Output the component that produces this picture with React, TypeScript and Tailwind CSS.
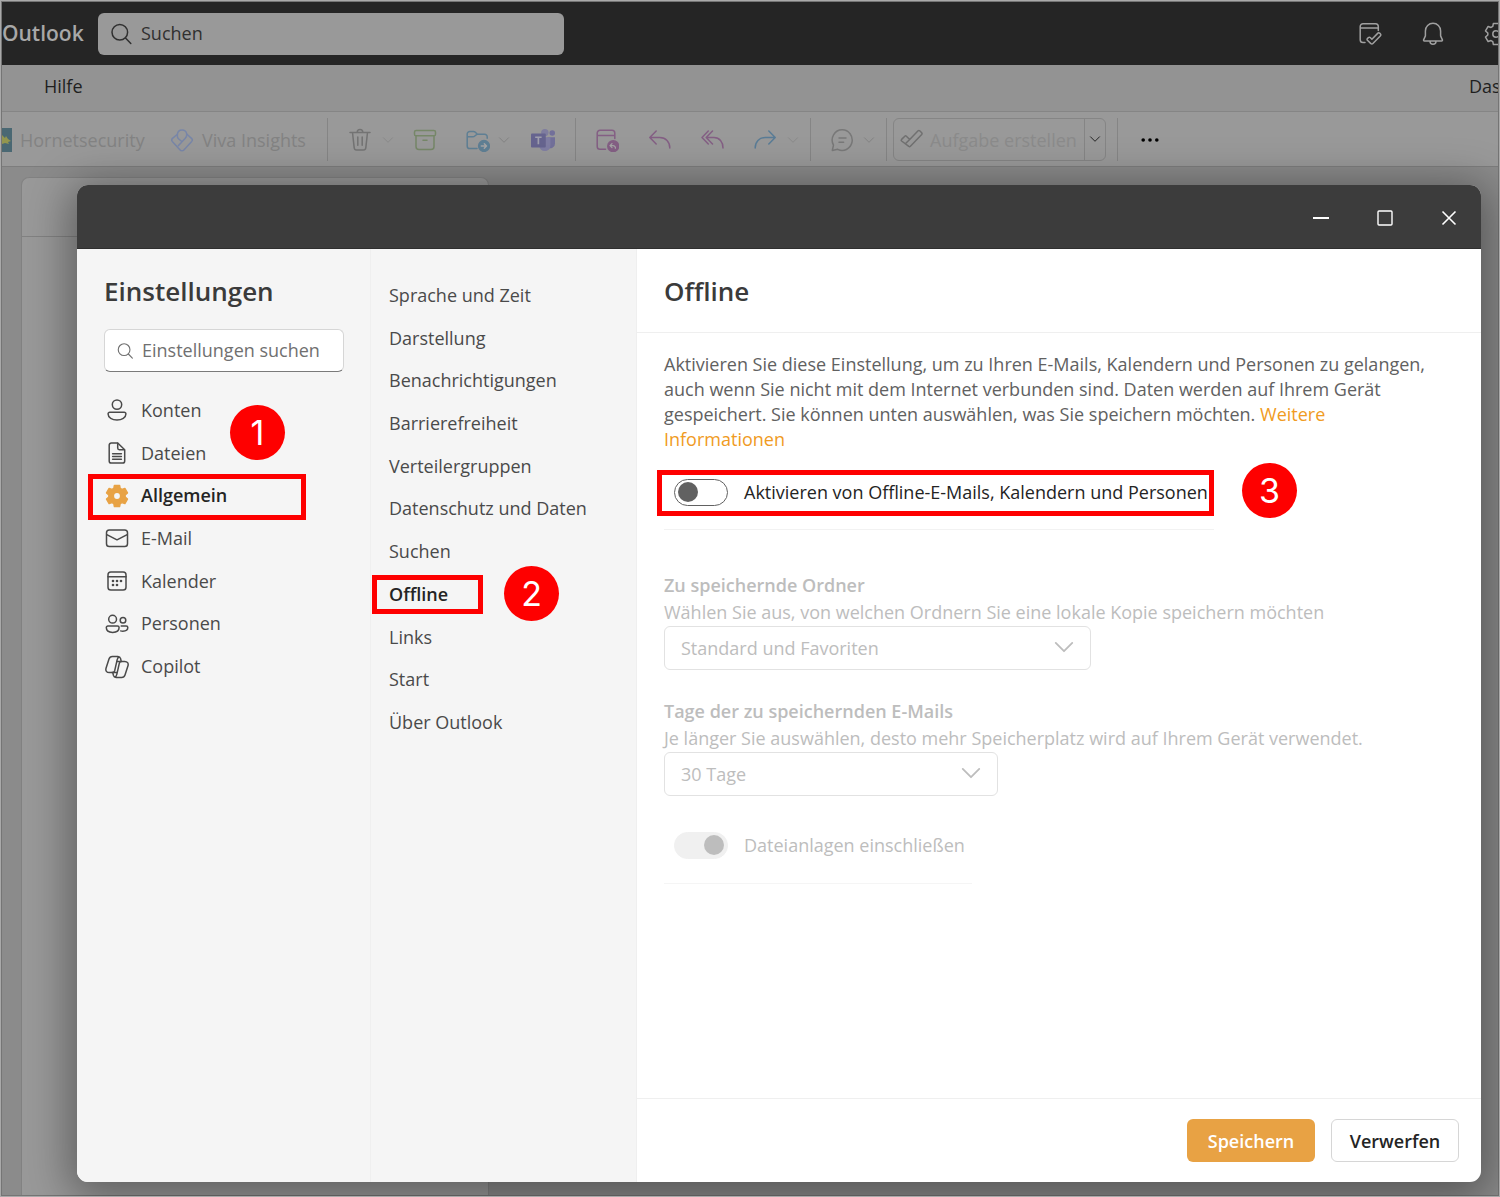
import { useState, type ReactNode } from "react";

type IconProps = { children: ReactNode; className?: string; size?: number };

function Icon({ children, className = "", size = 24 }: IconProps) {
  return (
    <svg
      width={size}
      height={size}
      viewBox="0 0 24 24"
      fill="none"
      stroke="currentColor"
      strokeWidth={1.5}
      strokeLinecap="round"
      strokeLinejoin="round"
      aria-hidden="true"
      className={`shrink-0 ${className}`}
    >
      {children}
    </svg>
  );
}

const gearPath =
  "M8.8 4.4 9.4 1.4H14.6L15.2 4.4 16.98 5.43 19.88 4.45 22.48 8.95 20.18 10.97V13.03L22.48 15.05 19.88 19.55 16.98 18.57 15.2 19.6 14.6 22.6H9.4L8.8 19.6 7.02 18.57 4.12 19.55 1.52 15.05 3.82 13.03V10.97L1.52 8.95 4.12 4.45 7.02 5.43Z";

const SearchIcon = ({ size = 24, className = "" }: { size?: number; className?: string }) => (
  <Icon size={size} className={className}>
    <circle cx="10.8" cy="10.2" r="7.8" />
    <path d="m16.5 16 5.3 5.5" />
  </Icon>
);

const ChevronDown = ({ size = 12, className = "" }: { size?: number; className?: string }) => (
  <svg
    width={size}
    height={size}
    viewBox="0 0 12 12"
    fill="none"
    stroke="currentColor"
    strokeLinecap="round"
    strokeLinejoin="round"
    aria-hidden="true"
    className={`shrink-0 ${className}`}
  >
    <path d="m1.5 3.8 4.5 4.5 4.5-4.5" />
  </svg>
);

const categories = [
  {
    label: "Konten",
    icon: (
      <Icon>
        <circle cx="12" cy="6.6" r="4.7" />
        <path d="M4.8 14.2h14.4a1.7 1.7 0 0 1 1.7 1.8c0 3.6-4 6-8.9 6s-8.9-2.4-8.9-6a1.7 1.7 0 0 1 1.7-1.8z" />
      </Icon>
    ),
  },
  {
    label: "Dateien",
    icon: (
      <Icon>
        <path d="M6.3 2h6.4l7 6.7v11.2a2.1 2.1 0 0 1-2.1 2.1H6.3a2.1 2.1 0 0 1-2.1-2.1V4.1A2.1 2.1 0 0 1 6.3 2z" />
        <path d="M12.7 2.2v4.9a1.6 1.6 0 0 0 1.6 1.6h5M7.6 12.7h8.8M7.6 15.5h8.8M7.6 18.3h8.8" />
      </Icon>
    ),
  },
  {
    label: "Allgemein",
    icon: (
      <Icon className="text-[#e8a244]">
        <path fill="currentColor" strokeWidth="1.4" d={gearPath} />
        <circle cx="12" cy="12" r="2.9" fill="#f5f5f5" stroke="none" />
      </Icon>
    ),
  },
  {
    label: "E-Mail",
    icon: (
      <Icon>
        <rect x="1.5" y="4" width="21" height="16.6" rx="2.8" />
        <path d="m1.8 8.6 10.2 5.2 10.2-5.2" />
      </Icon>
    ),
  },
  {
    label: "Kalender",
    icon: (
      <Icon>
        <rect x="3" y="3" width="18" height="18" rx="2.8" />
        <path d="M3 7.8h18" />
        <g fill="currentColor" stroke="none">
          <circle cx="8" cy="12" r="1.3" />
          <circle cx="12" cy="12" r="1.3" />
          <circle cx="16" cy="12" r="1.3" />
          <circle cx="8" cy="16" r="1.3" />
          <circle cx="12" cy="16" r="1.3" />
        </g>
      </Icon>
    ),
  },
  {
    label: "Personen",
    icon: (
      <Icon>
        <circle cx="7.6" cy="7.2" r="3.9" />
        <circle cx="18" cy="8.2" r="2.8" />
        <path d="M2.9 14h9.6a1.6 1.6 0 0 1 1.6 1.6c0 3.2-2.6 4.8-6.4 4.8s-6.4-1.6-6.4-4.8A1.6 1.6 0 0 1 2.9 14zM16.2 14h5a1.6 1.6 0 0 1 1.6 1.6c0 2.4-2.2 3.6-5 3.6-.8 0-1.5-.1-2.1-.3" />
      </Icon>
    ),
  },
  {
    label: "Copilot",
    icon: (
      <Icon>
        <path d="M16.2 6.4 15.6 3.6A2.8 2.8 0 0 0 12.9 1.6H7.4A3.6 3.6 0 0 0 4 4.1L1.1 13C.2 15.9 1.7 17.6 4.3 17.6H7.2A2.6 2.6 0 0 0 9.7 15.7L12.2 4.6Q12.8 1.9 14.4 2.2" />
        <path d="M7.8 17.6 8.4 20.4A2.8 2.8 0 0 0 11.1 22.4H16.6A3.6 3.6 0 0 0 20 19.9L22.9 11C23.8 8.1 22.3 6.4 19.7 6.4H16.8A2.6 2.6 0 0 0 14.3 8.3L11.8 19.4Q11.2 22.1 9.6 21.8M11.8 6.4H17M7 17.6H12.2" />
      </Icon>
    ),
  },
];

const pages = [
  "Sprache und Zeit",
  "Darstellung",
  "Benachrichtigungen",
  "Barrierefreiheit",
  "Verteilergruppen",
  "Datenschutz und Daten",
  "Suchen",
  "Offline",
  "Links",
  "Start",
  "Über Outlook",
];

function Step({ n, className }: { n: number; className: string }) {
  return (
    <span
      className={`pointer-events-none absolute z-10 flex size-[55px] items-center justify-center rounded-full bg-[#fe0000] font-['Inter',sans-serif] text-[34px] font-normal text-white ${className}`}
    >
      {n}
    </span>
  );
}

function Marker({ className }: { className: string }) {
  return <span className={`pointer-events-none absolute border-[5px] border-[#fe0000] ${className}`} />;
}

const Divider = ({ className = "" }: { className?: string }) => (
  <span className={`h-[43px] w-px shrink-0 bg-[#858585] ${className}`} />
);

function Tool({ label, className, children }: { label: string; className: string; children: ReactNode }) {
  return (
    <button
      type="button"
      aria-label={label}
      className={`flex h-full shrink-0 items-center justify-center pt-[2px] ${className}`}
    >
      {children}
    </button>
  );
}

function Toolbar() {
  return (
    <div className="flex h-[55px] items-center overflow-hidden border-b border-[#7d7d7d] bg-[#999999] text-[#838383]">
      <button type="button" className="flex w-[154px] shrink-0 items-center gap-2 pt-[2px]">
        <svg width="10" height="24" viewBox="0 0 10 24" aria-hidden="true" className="shrink-0">
          <path fill="#4a6873" d="M0 0h10v24H0z" />
          <path fill="#93964f" d="m0 7 3 3 1-2 2 3 3 2-3 1 1 2-4-1-3 1z" />
        </svg>
        Hornetsecurity
      </button>
      <button type="button" className="flex w-[171px] shrink-0 items-center gap-2 pt-[2px] pl-[14px]">
        <Icon className="text-[#7886a8]">
          <path d="M7.4 6.2A4.7 4.7 0 0 1 16.7 6l4.8 4.4a2.2 2.2 0 0 1 .2 3l-7.8 8.5a2.5 2.5 0 0 1-3.8 0L2.3 13.4a2.2 2.2 0 0 1 .2-3z" />
          <path d="M7.4 6.2v2.2c0 1.2.6 1.9 1.4 2.6l3.2 2.8M16.7 6c.2 1.8-.3 3-1.4 4.2l-7 7.6" />
        </Icon>
        Viva Insights
      </button>
      <Divider />
      <Tool label="Löschen" className="ml-2 w-[48px] text-[#737373]">
        <Icon>
          <path d="M2 4.5h20M4.5 4.5l1.7 15.3a2.4 2.4 0 0 0 2.4 2.2h6.8a2.4 2.4 0 0 0 2.4-2.2l1.7-15.3M9.2 4.3a2.8 2.8 0 0 1 5.6 0M9.8 9v8.3M14.2 9v8.3" />
        </Icon>
      </Tool>
      <Tool label="Löschoptionen" className="w-2 text-[#8a8a8a]">
        <ChevronDown />
      </Tool>
      <Tool label="Archivieren" className="w-[66px] text-[#768768]">
        <Icon>
          <rect x="1.5" y="2.5" width="21" height="5.3" rx="1.6" />
          <path d="M3 7.8v10.7a3 3 0 0 0 3 3h12a3 3 0 0 0 3-3V7.8M10 12.2h4" />
        </Icon>
      </Tool>
      <Tool label="Verschieben" className="w-10 text-[#5f7f94]">
        <Icon>
          <path d="M11 20.5H3.8a2.6 2.6 0 0 1-2.6-2.6V6.1a2.6 2.6 0 0 1 2.6-2.6h3.6a3 3 0 0 1 2 .8l1.9 1.9h7.3a2.6 2.6 0 0 1 2.6 2.6v1.5M1.2 8.8h5.6a3 3 0 0 0 2-.8l2.3-1.8" />
          <circle cx="18" cy="18" r="5.4" fill="currentColor" />
          <path d="M15.3 18h5M18.3 15.8l2.2 2.2-2.2 2.2" stroke="#a5a5a5" />
        </Icon>
      </Tool>
      <Tool label="Ordneroptionen" className="w-3">
        <ChevronDown />
      </Tool>
      <Tool label="In Teams teilen" className="w-[65px]">
        <svg width="24" height="24" viewBox="0 0 26 26" aria-hidden="true">
          <circle cx="15" cy="5" r="4" fill="#7f7d9f" />
          <circle cx="23" cy="5.5" r="3" fill="#72709a" />
          <path fill="#72709a" d="M18 10h8v7a5 5 0 0 1-8 4z" />
          <path fill="#7f7da3" d="M9 10h12v9a6 6 0 0 1-12 0z" />
          <rect x="0" y="6" width="16" height="15" rx="1" fill="#66648f" />
          <path d="M4.5 10h7M8 10v7.5" stroke="#9f9fae" strokeWidth="1.8" />
        </svg>
      </Tool>
      <Divider />
      <Tool label="Besprechung" className="w-[62px] text-[#845f84]">
        <Icon>
          <path d="M10.5 21.2H5a2.8 2.8 0 0 1-2.8-2.8V5.1A2.8 2.8 0 0 1 5 2.3h12a2.8 2.8 0 0 1 2.8 2.8v5.5M2.2 7.5h17.6" />
          <circle cx="18.2" cy="18.2" r="5.4" fill="currentColor" />
          <path d="m17 15.6-2 2 2 2M15.2 17.6H18a2.4 2.4 0 0 1 2.4 2.6" stroke="#a5a5a5" strokeWidth="1.3" />
        </Icon>
      </Tool>
      <Tool label="Antworten" className="w-[44px] text-[#845f84]">
        <Icon>
          <path d="M8.2 3 1.8 9.5 8.2 16M2 9.5h9.8c6 0 10 4.4 10 10.5" />
        </Icon>
      </Tool>
      <Tool label="Allen antworten" className="w-[62px] text-[#845f84]">
        <Icon>
          <path d="M11.5 3 5.2 9.5l6.3 6.5M7.3 3 1 9.5 7.3 16M5.4 9.5h7.6c5.4 0 9 4.4 9 10.5" />
        </Icon>
      </Tool>
      <Tool label="Weiterleiten" className="w-[42px] text-[#5a7c96]">
        <Icon>
          <path d="m15.8 3 6.4 6.5-6.4 6.5M22 9.5h-9.8c-6 0-10 4.4-10 10.5" />
        </Icon>
      </Tool>
      <Tool label="Weiterleitungsoptionen" className="mr-[10px] w-[14px] text-[#8a8a8a]">
        <ChevronDown />
      </Tool>
      <Divider />
      <Tool label="Chat" className="ml-[11px] w-10 text-[#787878]">
        <Icon>
          <path d="M12.3 1.8a10 10.3 0 1 1-4.6 19.5L2.3 22.4l1.2-5.2A10 10.3 0 0 1 12.3 1.8zM9 10h7M9 14.3h4.6" />
        </Icon>
      </Tool>
      <Tool label="Chatoptionen" className="mr-[10px] w-[14px]">
        <ChevronDown />
      </Tool>
      <Divider />
      <div className="ml-[6px] flex h-[43px] shrink-0 items-center rounded-md border border-[#858585]">
        <button type="button" className="flex w-[190px] items-center gap-[6px] pt-[2px] pl-[6px] text-[#8b8b8b]">
          <Icon className="text-[#707070]">
            <path d="m1.6 11.4 3.2-3.2a1.2 1.2 0 0 1 1.6 0l3.3 3.3 8.4-8.7a1.2 1.2 0 0 1 1.6 0l2 2a1.2 1.2 0 0 1 0 1.6L10.4 18.3a1.2 1.2 0 0 1-1.6 0l-7.2-5.3a1.2 1.2 0 0 1 0-1.6zM9.7 11.5l-4.4 4.2" />
          </Icon>
          Aufgabe erstellen
        </button>
        <button
          type="button"
          aria-label="Weitere Aufgabenoptionen"
          className="flex h-full w-[21px] items-center justify-center border-l border-[#858585] text-[#252525]"
        >
          <ChevronDown />
        </button>
      </div>
      <Divider className="ml-[11px]" />
      <Tool label="Mehr" className="w-[63px] text-black">
        <svg width="18" height="6" viewBox="0 0 18 6" fill="currentColor" aria-hidden="true">
          <circle cx="2.2" cy="3" r="1.8" />
          <circle cx="9" cy="3" r="1.8" />
          <circle cx="15.8" cy="3" r="1.8" />
        </svg>
      </Tool>
    </div>
  );
}

function MailWindow() {
  return (
    <div className="flex flex-1 flex-col overflow-hidden border border-[#757575] bg-[#8b8b8b]">
      <header className="flex h-[63px] items-center bg-[#252525]">
        <span className="w-[96px] text-[21px] font-semibold text-[#a8a8a8]">Outlook</span>
        <label className="flex h-[42px] w-[466px] items-center gap-2 rounded-md bg-[#999999] pl-[11px] text-[#303030]">
          <SearchIcon />
          <input
            type="search"
            aria-label="Suchen"
            placeholder="Suchen"
            className="min-w-0 flex-1 bg-transparent outline-none placeholder:text-[#303030]"
          />
        </label>
        <div className="ml-auto flex w-[140px] gap-[39px] overflow-hidden text-[#a0a0a0]">
          <button type="button" aria-label="Mein Tag">
            <Icon>
              <path d="M7 20.6H5a2.8 2.8 0 0 1-2.8-2.8V4.5A2.8 2.8 0 0 1 5 1.7h12.5a2.8 2.8 0 0 1 2.8 2.8v4M2.2 5.9h18" />
              <path d="m9.4 16.6 1.1-1.1a1.2 1.2 0 0 1 1.7 0l1.7 1.7 6-6.1a1.2 1.2 0 0 1 1.7 0l.9.9a1.2 1.2 0 0 1 0 1.7l-7.6 7.9a1.4 1.4 0 0 1-2 0l-3.5-3.3a1.2 1.2 0 0 1 0-1.7z" />
            </Icon>
          </button>
          <button type="button" aria-label="Benachrichtigungen">
            <Icon>
              <path d="M12 1.3a7.6 7.6 0 0 1 7.6 7.6v5l1.8 4a.8.8 0 0 1-.7 1.1H3.3a.8.8 0 0 1-.7-1.1l1.8-4v-5A7.6 7.6 0 0 1 12 1.3zM9 19.2a3 3 0 0 0 6 0" />
            </Icon>
          </button>
          <button type="button" aria-label="Einstellungen" className="shrink-0">
            <Icon>
              <path d={gearPath} />
              <circle cx="12" cy="12" r="3.2" />
            </Icon>
          </button>
        </div>
      </header>
      <nav className="flex h-[47px] items-center justify-between border-b border-[#858585] bg-[#939393] pb-[3px] pl-[42px] text-[#1f1f1f]">
        <button type="button">Hilfe</button>
        <span className="w-[29px] overflow-hidden font-medium">Das</span>
      </nav>
      <Toolbar />
      <div className="flex flex-1 pt-[10px] pl-[19px]">
        <div className="w-[468px] rounded-t-lg border border-b-0 border-[#828282] bg-[#999999]">
          <div className="h-[59px] border-b border-[#828282]" />
        </div>
      </div>
    </div>
  );
}

function Toggle({
  id,
  label,
  checked,
  disabled,
  onChange,
}: {
  id: string;
  label: string;
  checked: boolean;
  disabled?: boolean;
  onChange?: (v: boolean) => void;
}) {
  return (
    <label
      htmlFor={id}
      className={`flex items-center gap-4 ${disabled ? "text-[#bdbdbd]" : "text-[#242424]"}`}
    >
      <input
        id={id}
        type="checkbox"
        role="switch"
        className="peer sr-only"
        checked={checked}
        disabled={disabled}
        onChange={(e) => onChange?.(e.target.checked)}
      />
      <span
        className={`flex h-[27px] w-[54px] items-center rounded-full border px-[3px] pb-[2px] ${
          disabled ? "border-[#f0f0f0] bg-[#f0f0f0]" : "border-[#616161] bg-white"
        } ${checked ? "justify-end" : "justify-start"}`}
      >
        <span className={`size-[20px] rounded-full ${disabled ? "bg-[#bdbdbd]" : "bg-[#616161]"}`} />
      </span>
      {label}
    </label>
  );
}

function Field({ id, title, hint, value, width }: { id: string; title: string; hint: string; value: string; width: string }) {
  return (
    <div className="text-[#bdbdbd]">
      <label htmlFor={id} className="block">
        <span className="block leading-[27px] font-semibold">{title}</span>
        <span className="block leading-[27px]">{hint}</span>
      </label>
      <div className={`relative ${width}`}>
        <select
          id={id}
          disabled
          className="h-[44px] w-full appearance-none rounded-md border border-[#e2e2e2] bg-white px-4 opacity-100"
        >
          <option>{value}</option>
        </select>
        <ChevronDown size={22} className="absolute top-[10px] right-4" />
      </div>
    </div>
  );
}

function SettingsDialog() {
  const [category, setCategory] = useState("Allgemein");
  const [page, setPage] = useState("Offline");
  const [offline, setOffline] = useState(false);

  return (
    <section
      role="dialog"
      aria-label="Einstellungen"
      className="flex flex-1 flex-col overflow-hidden rounded-[11px] bg-white shadow-[0_8px_44px_8px_rgba(0,0,0,0.38)]"
    >
      <div className="flex h-[64px] shrink-0 items-center justify-end border-b border-[#2f2f2f] bg-[#3c3c3c] pt-[3px] text-white">
        <button type="button" aria-label="Minimieren" className="flex h-full w-16 items-center justify-center">
          <svg width="16" height="16" viewBox="0 0 16 16" stroke="currentColor" strokeWidth="2" aria-hidden="true">
            <path d="M0 8h16" />
          </svg>
        </button>
        <button type="button" aria-label="Maximieren" className="flex h-full w-16 items-center justify-center">
          <svg width="16" height="16" viewBox="0 0 16 16" fill="none" stroke="currentColor" strokeWidth="1.4" aria-hidden="true">
            <rect x="1" y="1" width="14" height="14" rx="1" />
          </svg>
        </button>
        <button type="button" aria-label="Schließen" className="flex h-full w-16 items-center justify-center">
          <svg width="16" height="16" viewBox="0 0 16 16" fill="none" stroke="currentColor" strokeWidth="1.6" aria-hidden="true">
            <path d="m1.5 1.5 13 13M14.5 1.5l-13 13" />
          </svg>
        </button>
      </div>

      <div className="flex flex-1">
        {/* Categories */}
        <aside className="w-[294px] shrink-0 border-r border-[#efefef] bg-[#f5f5f5] pt-6 pr-[26px] pl-[27px]">
          <h1 className="text-[26px] leading-9 font-semibold text-[#3b3b3b]">Einstellungen</h1>
          <label className="mt-5 flex h-[43px] items-center gap-2 rounded-md border border-[#d6d6d6] border-b-[#7a7a7a] bg-white pl-[11px] text-[#707070]">
            <SearchIcon size={18} />
            <input
              type="search"
              aria-label="Einstellungen suchen"
              placeholder="Einstellungen suchen"
              className="min-w-0 flex-1 bg-transparent outline-none placeholder:text-[#707070]"
            />
          </label>
          <nav className="relative mt-[17px] ml-px grid h-[299px] auto-rows-fr">
            {categories.map((c) => (
              <button
                key={c.label}
                type="button"
                onClick={() => setCategory(c.label)}
                className={`relative flex items-center gap-3 text-left ${
                  category === c.label ? "font-semibold text-[#242424]" : "text-[#4a4a4a]"
                }`}
              >
                {c.icon}
                {c.label}
                {c.label === "Allgemein" && <Marker className="top-0 -left-[17px] h-[46px] w-[218px]" />}
              </button>
            ))}
            <Step n={1} className="top-4 left-[125px]" />
          </nav>
        </aside>

        {/* Pages of the selected category */}
        <nav className="relative w-[266px] shrink-0 border-r border-[#efefef] bg-[#f5f5f5] pt-[25px] pl-[18px]">
          <ul className="grid h-[470px] auto-rows-fr">
            {pages.map((p) => (
              <li key={p} className="relative flex items-center">
                <button
                  type="button"
                  onClick={() => setPage(p)}
                  className={page === p ? "font-semibold text-[#242424]" : "text-[#4a4a4a]"}
                >
                  {p}
                </button>
                {p === "Offline" && (
                  <>
                    <Marker className="top-[2px] -left-[17px] h-[39px] w-[111px]" />
                    <Step n={2} className="-top-[7px] left-[115px]" />
                  </>
                )}
              </li>
            ))}
          </ul>
        </nav>

        {/* Offline settings */}
        <div className="flex min-w-0 flex-1 flex-col">
          <h2 className="h-[84px] border-b border-[#efefef] pt-6 pl-[27px] text-[26px] leading-9 font-semibold text-[#3b3b3b]">
            Offline
          </h2>
          <div className="flex-1 pt-[19px] pr-11 pl-[27px]">
            <p className="leading-[25px] text-[#616161]">
              Aktivieren Sie diese Einstellung, um zu Ihren E-Mails, Kalendern und Personen zu gelangen, auch wenn Sie
              nicht mit dem Internet verbunden sind. Daten werden auf Ihrem Gerät gespeichert. Sie können unten
              auswählen, was Sie speichern möchten.{" "}
              <a href="#offline" className="text-[#f09b23]">
                Weitere Informationen
              </a>
            </p>
            <div className="relative mt-[18px] flex h-[60px] w-[550px] items-start border-b border-[#f2f2f2] pt-[9px] pl-[10px]">
              <Toggle
                id="offline-mail"
                label="Aktivieren von Offline-E-Mails, Kalendern und Personen"
                checked={offline}
                onChange={setOffline}
              />
              <Marker className="top-0 -left-[7px] h-[46px] w-[557px]" />
              <Step n={3} className="-top-[7px] left-[578px]" />
            </div>
            <div className="mt-[42px] flex flex-col gap-7">
              <Field
                id="folders"
                title="Zu speichernde Ordner"
                hint="Wählen Sie aus, von welchen Ordnern Sie eine lokale Kopie speichern möchten"
                value="Standard und Favoriten"
                width="w-[427px]"
              />
              <Field
                id="days"
                title="Tage der zu speichernden E-Mails"
                hint="Je länger Sie auswählen, desto mehr Speicherplatz wird auf Ihrem Gerät verwendet."
                value="30 Tage"
                width="w-[334px]"
              />
            </div>
            <div className="mt-9 h-[52px] w-[308px] border-b border-[#f5f5f5] pl-[10px]">
              <Toggle id="attachments" label="Dateianlagen einschließen" checked disabled />
            </div>
          </div>
          <footer className="flex h-[84px] shrink-0 items-center justify-end gap-4 border-t border-[#efefef] pr-[22px]">
            <button type="button" className="h-[43px] w-[128px] rounded-md bg-[#e8a244] pt-px font-semibold text-white">
              Speichern
            </button>
            <button
              type="button"
              className="h-[43px] w-[128px] rounded-md border border-[#d6d6d6] bg-white pt-px font-semibold text-[#242424]"
            >
              Verwerfen
            </button>
          </footer>
        </div>
      </div>
    </section>
  );
}

export default function App() {
  return (
    <main className="relative flex min-h-screen overflow-hidden border border-[#a9a9a9] font-['Open_Sans',sans-serif] text-[18px]">
      <MailWindow />
      <div className="absolute inset-0 flex pt-[184px] pr-[18px] pb-[14px] pl-[76px]">
        <SettingsDialog />
      </div>
    </main>
  );
}
